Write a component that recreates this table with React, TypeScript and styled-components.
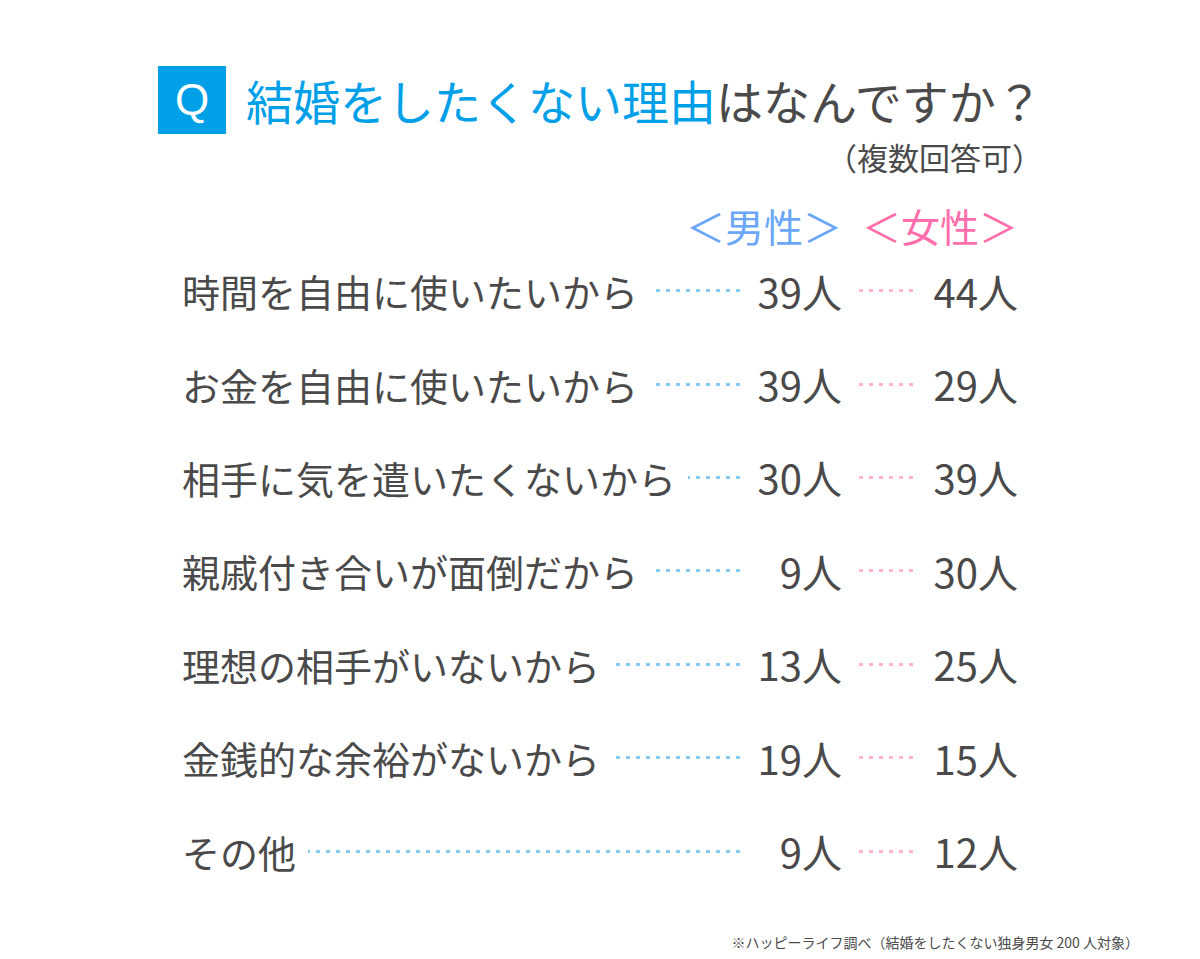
import React from 'react';
import styled, { createGlobalStyle } from 'styled-components';

const GlobalStyle = createGlobalStyle`
  html, body {
    margin: 0;
    padding: 0;
    background: #ffffff;
  }
  body {
    font-family: 'Noto Sans CJK JP', 'Noto Sans', sans-serif;
    color: #4a4a4a;
  }
`;

const colors = {
  blue: '#00a0e9',
  text: '#4a4a4a',
  male: '#6aa7f8',
  female: '#ff6fab',
  maleDots: '#86cbef',
  femaleDots: '#ffb3d2',
};

const Page = styled.main`
  width: 1200px;
  height: 959px;
  box-sizing: border-box;
  padding: 66px 0 0;
  display: flex;
  flex-direction: column;
`;

const TitleRow = styled.h1`
  margin: 0 0 0 158px;
  height: 68px;
  display: flex;
  align-items: center;
  gap: 20px;
  font-weight: 400;
  font-size: 47px;
  line-height: 56px;
  color: ${colors.text};
`;

const QBox = styled.span`
  width: 68px;
  height: 68px;
  flex: none;
  background: ${colors.blue};
  color: #fff;
  display: flex;
  align-items: center;
  justify-content: center;
  font-family: 'Liberation Sans', Arial, sans-serif;
  font-size: 44px;
  line-height: 1;
`;

const TitleAccent = styled.span`
  color: ${colors.blue};
`;

const SubTitle = styled.p`
  margin: 6px 0 0;
  padding-right: 157px;
  text-align: right;
  font-size: 31px;
  line-height: 34px;
  color: ${colors.text};
`;

const Legend = styled.div`
  margin-top: 32px;
  height: 38px;
  display: flex;
  justify-content: flex-end;
  padding-right: 182px;
  font-size: 39px;
  line-height: 38px;
`;

const LegendItem = styled.span<{ $color: string; $width: number }>`
  color: ${(p) => p.$color};
  width: ${(p) => p.$width}px;
  text-align: right;
  white-space: nowrap;
`;

const List = styled.ul`
  list-style: none;
  margin: 0;
  padding: 0 0 0 182px;
  width: 1018px;
  box-sizing: border-box;
`;

const Row = styled.li`
  height: 93.4px;
  display: flex;
  align-items: center;
  font-size: 38px;
  color: ${colors.text};
`;

const Label = styled.span`
  flex: 1;
  display: flex;
  align-items: center;
  white-space: nowrap;
  min-width: 0;
`;

const Dots = styled.span<{ $color: string }>`
  height: 3px;
  background-image: linear-gradient(
    to right,
    transparent 0 6px,
    ${(p) => p.$color} 6px 10px
  );
  background-size: 10px 3px;
  background-repeat: repeat-x;
  background-position: right center;
`;

const LeaderDots = styled(Dots)`
  flex: 1;
  margin-left: 12px;
`;

const GapDots = styled(Dots)`
  width: 56px;
  flex: none;
  margin-left: 15px;
`;

const Value = styled.span<{ $width: number }>`
  width: ${(p) => p.$width}px;
  flex: none;
  text-align: right;
  white-space: nowrap;
  font-size: 40px;
`;

const Footer = styled.p`
  margin: 34px 0 0;
  padding-right: 61px;
  text-align: right;
  font-size: 14px;
  line-height: 20px;
  color: ${colors.text};
`;

type Item = { label: string; male: number; female: number };

const items: Item[] = [
  { label: '時間を自由に使いたいから', male: 39, female: 44 },
  { label: 'お金を自由に使いたいから', male: 39, female: 29 },
  { label: '相手に気を遣いたくないから', male: 30, female: 39 },
  { label: '親戚付き合いが面倒だから', male: 9, female: 30 },
  { label: '理想の相手がいないから', male: 13, female: 25 },
  { label: '金銭的な余裕がないから', male: 19, female: 15 },
  { label: 'その他', male: 9, female: 12 },
];

export default function App() {
  return (
    <>
      <GlobalStyle />
      <Page>
        <TitleRow>
          <QBox>Q</QBox>
          <span>
            <TitleAccent>結婚をしたくない理由</TitleAccent>はなんですか？
          </span>
        </TitleRow>
        <SubTitle>（複数回答可）</SubTitle>
        <Legend>
          <LegendItem $color={colors.male} $width={156}>＜男性＞</LegendItem>
          <LegendItem $color={colors.female} $width={176}>＜女性＞</LegendItem>
        </Legend>
        <List>
          {items.map((item) => (
            <Row key={item.label}>
              <Label>
                {item.label}
                <LeaderDots $color={colors.maleDots} />
              </Label>
              <Value $width={102}>{item.male}人</Value>
              <GapDots $color={colors.femaleDots} />
              <Value $width={105}>{item.female}人</Value>
            </Row>
          ))}
        </List>
        <Footer>※ハッピーライフ調べ（結婚をしたくない独身男女 200 人対象）</Footer>
      </Page>
    </>
  );
}
